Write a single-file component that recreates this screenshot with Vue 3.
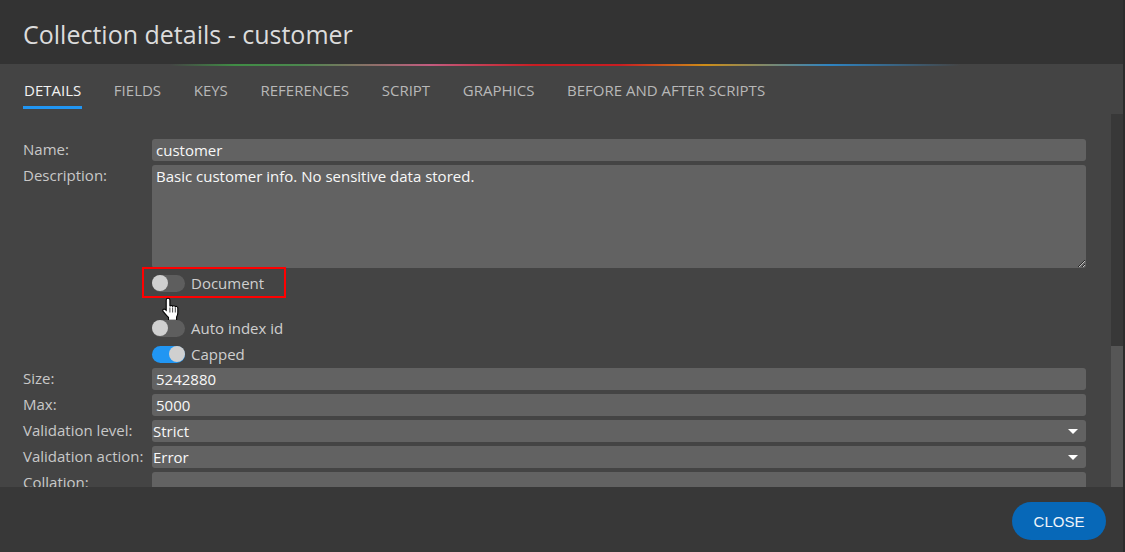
<script setup>
const tabs = ['Details', 'Fields', 'Keys', 'References', 'Script', 'Graphics', 'Before and after scripts']
</script>

<template>
  <div class="dialog">
    <header class="head"><h1 class="title">Collection details - customer</h1></header>
    <div class="rainbow"></div>
    <nav class="tabs">
      <span v-for="(t, i) in tabs" :key="t" class="tab" :class="{ active: i === 0 }">{{ t }}</span>
    </nav>
    <div class="middle">
      <main class="form">
        <div class="row"><span class="label">Name:</span><div class="field">customer</div></div>
        <div class="row desc"><span class="label">Description:</span><div class="field area">Basic customer info. No sensitive data stored.</div></div>
        <div class="switch-row first">
          <span class="switch"><i class="knob"></i></span><span class="switch-label">Document</span>
          <span class="highlight"></span>
          <svg class="hand" viewBox="0 0 17 24" width="17" height="24">
            <path d="M6 1.200c1.100 0 1.900.8 1.900 1.900v6.100c.5-1 2.400-1 2.800.1.500-.9 2.300-.8 2.600.4.600-.7 2.300-.4 2.500 1.100v5.200c0 1.800-.6 3-1.200 4.100v3.300H6.500v-3C4.800 18.600 3 17 1.100 14.400.2 13 1.700 11.300 3.300 12.500l.9.800V3.100C4.200 2 4.900 1.200 6 1.200z" fill="#fff" stroke="#000" stroke-width="1.100"/>
            <path d="M7.900 10.500v5M10.600 10.500v5M13.300 10.500v5" stroke="#333" stroke-width=".9" fill="none"/>
          </svg>
        </div>
        <div class="switch-row"><span class="switch"><i class="knob"></i></span><span class="switch-label">Auto index id</span></div>
        <div class="switch-row last"><span class="switch on"><i class="knob"></i></span><span class="switch-label">Capped</span></div>
        <div class="row"><span class="label">Size:</span><div class="field">5242880</div></div>
        <div class="row"><span class="label">Max:</span><div class="field">5000</div></div>
        <div class="row"><span class="label">Validation level:</span><div class="field select">Strict<i class="caret"></i></div></div>
        <div class="row"><span class="label">Validation action:</span><div class="field select">Error<i class="caret"></i></div></div>
        <div class="row"><span class="label">Collation:</span><div class="field"></div></div>
      </main>
      <div class="scrollbar"><div class="thumb"></div></div>
    </div>
    <footer class="foot"><button class="close">CLOSE</button></footer>
  </div>
</template>

<style>
html, body { margin: 0; background: #333; }
</style>

<style scoped>
.dialog {
  width: 1125px;
  height: 552px;
  display: flex;
  flex-direction: column;
  background: #444;
  color: #ccc;
  font-family: "Open Sans", sans-serif;
  font-size: 15px;
  overflow: hidden;
  box-sizing: border-box;
  border-right: 2px solid #2c2c2c;
}
.head {
  height: 64px;
  flex: none;
  background: #333;
  display: flex;
  align-items: center;
  padding: 0 23px;
  box-sizing: border-box;
}
.title {
  margin: 0;
  font-size: 25px;
  font-weight: 400;
  color: #dcdcdc;
  line-height: 1;
  position: relative;
  top: 2px;
}
.rainbow {
  height: 2px;
  flex: none;
  background: linear-gradient(90deg, transparent 0, transparent 170px, #3f9a45 235px, #4d9450 300px, #d9608a 430px, #e0161c 535px, #e0161c 620px, #e59a10 705px, #2a8fd8 830px, transparent 960px);
  opacity: .85;
}
.tabs {
  height: 48px;
  flex: none;
  display: flex;
  gap: 32.65px;
  padding: 0 24px;
  box-sizing: border-box;
}
.tab {
  text-transform: uppercase;
  color: #b8b8b8;
  height: 43px;
  line-height: 49px;
  position: relative;
}
.tab.active { color: #f2f2f2; }
.tab.active::after {
  content: "";
  position: absolute;
  left: -1px;
  right: -1px;
  bottom: 0;
  height: 3px;
  background: #2196f3;
}
.middle {
  flex: 1;
  min-height: 0;
  display: flex;
}
.form {
  flex: 1;
  min-width: 0;
  overflow: hidden;
  padding: 25px 25px 0 23px;
}
.row {
  display: grid;
  grid-template-columns: 129px 1fr;
  margin-bottom: 4px;
}
.row.desc { margin-bottom: 2px; }
.label {
  line-height: 20px;
  color: #c8c8c8;
  white-space: nowrap;
}
.field {
  height: 22px;
  line-height: 23px;
  background: #626262;
  border-radius: 3px;
  padding: 0 4px;
  color: #f8f8f8;
  box-sizing: border-box;
  position: relative;
}
.area {
  height: 103px;
  overflow: auto;
  resize: vertical;
  line-height: 23px;
}
.select { padding: 0 1px; }
.caret {
  position: absolute;
  right: 8px;
  top: 9px;
  width: 0;
  height: 0;
  border-left: 5px solid transparent;
  border-right: 5px solid transparent;
  border-top: 5px solid #fff;
}
.switch-row {
  height: 26px;
  display: flex;
  align-items: center;
  padding-left: 129px;
  gap: 6px;
  position: relative;
}
.switch-row.first { margin-bottom: 19px; }
.switch-row.last { margin-bottom: 1px; }
.switch {
  width: 33px;
  height: 17px;
  border-radius: 9px;
  background: #5e5e5e;
  position: relative;
  flex: none;
}
.knob {
  position: absolute;
  left: 0;
  top: .5px;
  width: 16px;
  height: 16px;
  border-radius: 50%;
  background: #d0d0d0;
}
.switch.on { background: #2196f3; }
.switch.on .knob { left: 17px; }
.switch-label { color: #cfcfcf; }
.highlight {
  position: absolute;
  left: 119px;
  top: -3px;
  width: 144px;
  height: 31px;
  border: 2px solid #f00;
  box-sizing: border-box;
}
.hand {
  position: absolute;
  left: 139px;
  top: 27px;
}
.scrollbar {
  width: 12px;
  flex: none;
  background: #383838;
  display: flex;
  flex-direction: column;
  justify-content: flex-end;
}
.thumb {
  height: 141px;
  background: #565656;
}
.foot {
  height: 65px;
  flex: none;
  background: #383838;
  display: flex;
  justify-content: flex-end;
  padding: 15px 17px 0 0;
  box-sizing: border-box;
  position: relative;
  z-index: 1;
}
.close {
  width: 94px;
  height: 38px;
  border: 0;
  border-radius: 19px;
  background: #0768b8;
  color: #eef4fa;
  font-family: "Liberation Sans", sans-serif;
  font-size: 15px;
  padding: 0;
}
</style>
